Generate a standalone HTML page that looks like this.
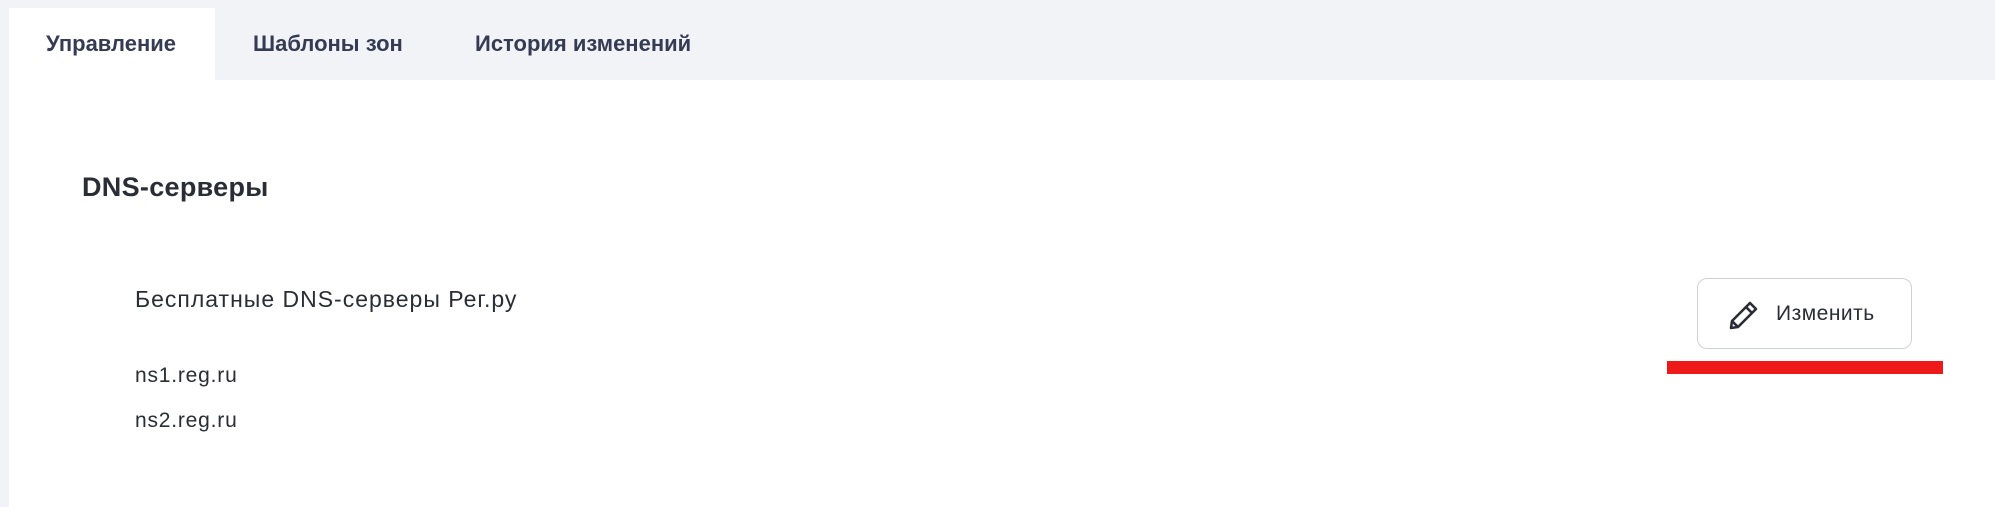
<!DOCTYPE html>
<html><head><meta charset="utf-8"><style>
*{margin:0;padding:0;box-sizing:border-box}
body{width:1995px;height:507px;background:#f2f3f7;font-family:"Liberation Sans",sans-serif;position:relative;overflow:hidden;color:#2a2d36}
.white{position:absolute;left:9px;top:80px;right:0;bottom:0;background:#fff}
.tab{position:absolute;top:8px;left:9px;width:206px;height:73px;background:#fff}
.t{position:absolute;font-weight:bold;font-size:22px;color:#343b52;top:32px;line-height:24px;white-space:nowrap}
.a{position:absolute;white-space:nowrap}
.btn{position:absolute;left:1697px;top:278px;width:215px;height:71px;border:1px solid #cfd1da;border-radius:10px;background:#fff}
.red{position:absolute;left:1667px;top:361px;width:276px;height:13px;background:#ee1a1a}
</style></head><body>
<div class="white"></div>
<div class="tab"></div>
<div class="t" style="left:46px">Управление</div>
<div class="t" style="left:253px">Шаблоны зон</div>
<div class="t" style="left:475px">История изменений</div>
<div class="a" style="left:82px;top:171px;font-size:27px;font-weight:bold;line-height:32px;letter-spacing:0.3px">DNS-серверы</div>
<div class="a" style="left:135px;top:285px;font-size:23px;line-height:28px;letter-spacing:1px">Бесплатные DNS-серверы Рег.ру</div>
<div class="a" style="left:135px;top:363px;font-size:21px;line-height:26px;letter-spacing:0.8px">ns1.reg.ru</div>
<div class="a" style="left:135px;top:408px;font-size:21px;line-height:26px;letter-spacing:0.8px">ns2.reg.ru</div>
<div class="btn">
<svg style="position:absolute;left:30px;top:20px" width="32" height="32" viewBox="0 0 32 32" fill="none" stroke="#2a2d36" stroke-width="2.6" stroke-linejoin="round"><path d="M3 29 L4 22 L22 4 L28 10 L10 28 Z M18 8 L24 14 M4 22 L10 28"/></svg>
<div class="a" style="left:78px;top:22px;font-size:21px;line-height:26px;letter-spacing:0.5px">Изменить</div>
</div>
<div class="red"></div>
</body></html>
